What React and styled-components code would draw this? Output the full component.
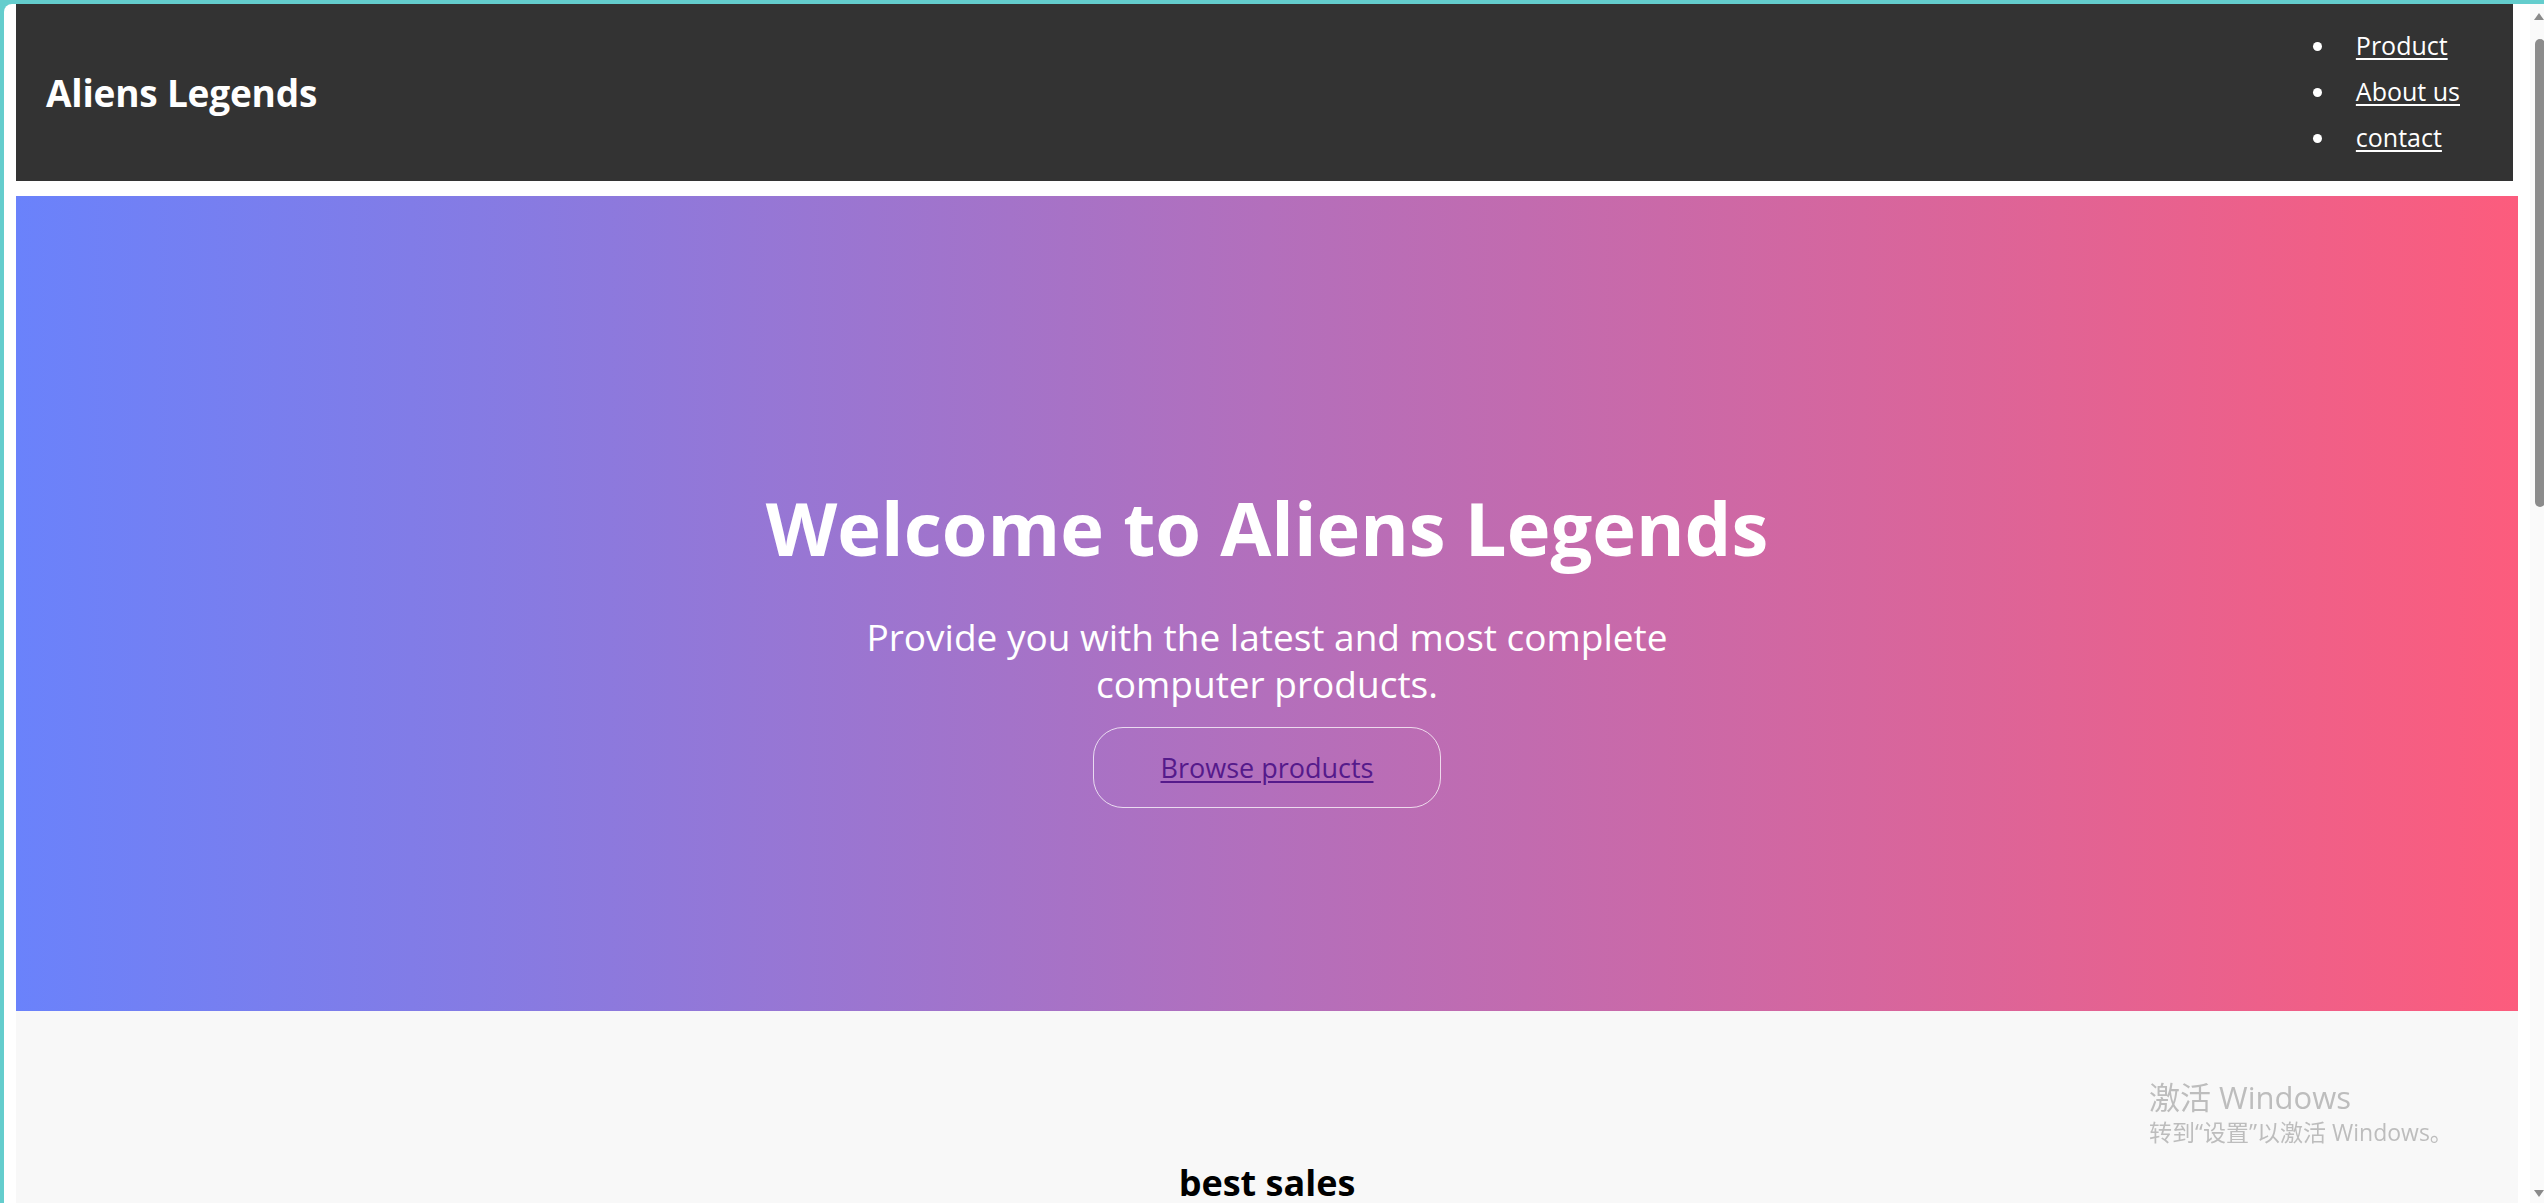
import React from "react";
import styled, { createGlobalStyle } from "styled-components";

const GlobalStyle = createGlobalStyle`
  html, body {
    margin: 0;
    padding: 0;
    height: 100%;
    overflow: hidden;
    background: #64cdcd;
  }
  #root { height: 100%; }
  * { box-sizing: border-box; }
`;

const Frame = styled.div`
  height: 100vh;
  padding: 4px 0 0 4px;
  font-family: "Segoe UI", "Open Sans", "Noto Sans", sans-serif;
`;

const Window = styled.div`
  height: 100%;
  background: #ffffff;
  border-top-left-radius: 8px;
  display: flex;
  overflow: hidden;
`;

const Page = styled.div`
  flex: 1;
  min-width: 0;
  padding: 0 12px;
  display: flex;
  flex-direction: column;
`;

const Header = styled.header`
  flex: none;
  height: 177px;
  margin-right: 5px;
  background: #333333;
  display: flex;
  align-items: center;
  justify-content: space-between;
  padding: 0 53px 0 30px;
`;

const Logo = styled.h1`
  margin: 0;
  color: #ffffff;
  font-size: 37px;
  font-weight: 700;
  letter-spacing: -0.2px;
`;

const NavList = styled.ul`
  margin: -3px 0 0;
  padding: 0;
  list-style: disc;
  color: #ffffff;
`;

const NavItem = styled.li`
  height: 46px;
  font-size: 25px;
  line-height: 46px;
  padding-left: 18px;
  white-space: nowrap;
  &::marker { font-size: 26px; }
`;

const NavLink = styled.a`
  color: #ffffff;
  text-decoration: underline;
  text-underline-offset: 3px;
`;

const Hero = styled.section`
  flex: none;
  height: 815px;
  margin-top: 15px;
  background: linear-gradient(to right, #6a82fb, #fc5c7d);
  display: flex;
  flex-direction: column;
  align-items: center;
  padding-top: 282px;
  color: #ffffff;
  text-align: center;
`;

const Title = styled.h2`
  margin: 0;
  font-size: 74px;
  line-height: 100px;
  font-weight: 700;
`;

const Subtitle = styled.p`
  margin: 35px 0 0;
  width: 860px;
  font-size: 37px;
  line-height: 47px;
  font-weight: 400;
`;

const Button = styled.div`
  margin-top: 20px;
  width: 348px;
  height: 81px;
  border: 1px solid rgba(255, 255, 255, 0.75);
  border-radius: 30px;
  display: flex;
  align-items: center;
  justify-content: center;
`;

const ButtonLink = styled.a`
  color: #551a8b;
  font-size: 27px;
  text-decoration: underline;
  text-underline-offset: 3px;
`;

const Sales = styled.section`
  flex: 1;
  background: #f8f8f8;
  display: flex;
  justify-content: center;
  padding-top: 152px;
`;

const SalesTitle = styled.h3`
  margin: 0;
  font-size: 36px;
  font-weight: 700;
  color: #000000;
  line-height: 40px;
`;

const Scrollbar = styled.div`
  flex: none;
  width: 14px;
  background: #fafafa;
  position: relative;
`;

const Arrow = styled.div`
  position: absolute;
  left: 4px;
  width: 0;
  height: 0;
  border-left: 5px solid transparent;
  border-right: 5px solid transparent;
  ${(p) =>
    p.$down
      ? `bottom: 6px; border-top: 7px solid #8a8a8a;`
      : `top: 9px; border-bottom: 7px solid #8a8a8a;`}
`;

const Thumb = styled.div`
  position: absolute;
  top: 35px;
  left: 5px;
  width: 10px;
  height: 468px;
  border-radius: 5px;
  background: #8c8c8c;
`;

const Watermark = styled.div`
  position: fixed;
  left: 2149px;
  top: 1077px;
  color: #bdbdbd;
  font-family: "Segoe UI", "Open Sans", "Noto Sans CJK SC", sans-serif;
  pointer-events: none;
`;

const WatermarkTitle = styled.div`
  font-size: 31px;
  line-height: 40px;
`;

const WatermarkText = styled.div`
  font-size: 23px;
  line-height: 30px;
`;

export default function App() {
  return (
    <>
      <GlobalStyle />
      <Frame>
        <Window>
          <Page>
            <Header>
              <Logo>Aliens Legends</Logo>
              <NavList>
                <NavItem><NavLink href="#">Product</NavLink></NavItem>
                <NavItem><NavLink href="#">About us</NavLink></NavItem>
                <NavItem><NavLink href="#">contact</NavLink></NavItem>
              </NavList>
            </Header>
            <Hero>
              <Title>Welcome to Aliens Legends</Title>
              <Subtitle>
                Provide you with the latest and most complete computer products.
              </Subtitle>
              <Button>
                <ButtonLink href="#">Browse products</ButtonLink>
              </Button>
            </Hero>
            <Sales>
              <SalesTitle>best sales</SalesTitle>
            </Sales>
          </Page>
          <Scrollbar>
            <Arrow />
            <Thumb />
            <Arrow $down />
          </Scrollbar>
        </Window>
      </Frame>
      <Watermark>
        <WatermarkTitle>激活 Windows</WatermarkTitle>
        <WatermarkText>转到“设置”以激活 Windows。</WatermarkText>
      </Watermark>
    </>
  );
}
